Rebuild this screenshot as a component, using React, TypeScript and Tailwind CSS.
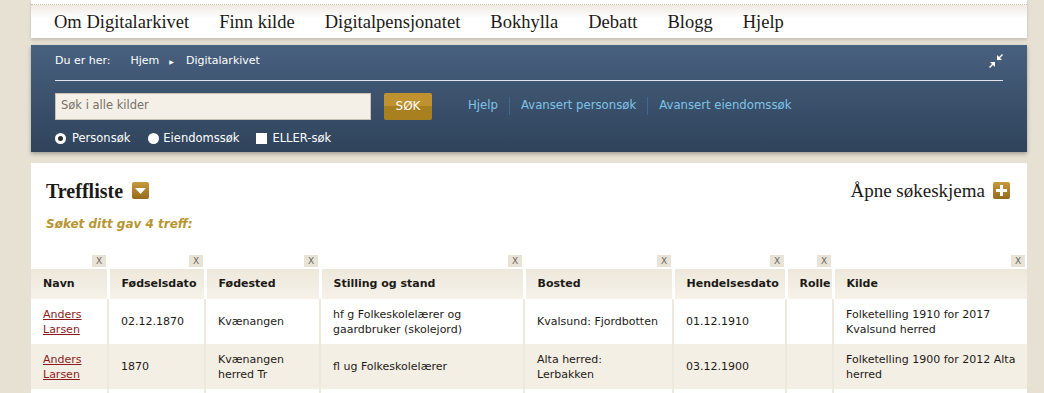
import React from 'react';

const navItems = ['Om Digitalarkivet', 'Finn kilde', 'Digitalpensjonatet', 'Bokhylla', 'Debatt', 'Blogg', 'Hjelp'];

const columns = [
    { label: 'Navn', width: 77 },
    { label: 'Fødselsdato', width: 97 },
    { label: 'Fødested', width: 115 },
    { label: 'Stilling og stand', width: 204 },
    { label: 'Bosted', width: 149 },
    { label: 'Hendelsesdato', width: 113 },
    { label: 'Rolle', width: 47 },
    { label: 'Kilde', width: 194 },
];

// each cell is a list of lines, the way the original table wraps them
const rows: string[][][] = [
    [['Anders', 'Larsen'], ['02.12.1870'], ['Kvænangen'], ['hf g Folkeskolelærer og', 'gaardbruker (skolejord)'], ['Kvalsund: Fjordbotten'], ['01.12.1910'], [], ['Folketelling 1910 for 2017', 'Kvalsund herred']],
    [['Anders', 'Larsen'], ['1870'], ['Kvænangen', 'herred Tr'], ['fl ug Folkeskolelærer'], ['Alta herred:', 'Lerbakken'], ['03.12.1900'], [], ['Folketelling 1900 for 2012 Alta', 'herred']],
    [[], [], [], [], [], [], [], []],
];

const serif = "font-['Liberation_Serif',Georgia,serif]";
const sans = "font-['DejaVu_Sans',Verdana,sans-serif]";

function GoldBox({ children }: { children: React.ReactNode }) {
    return (
        <span className="inline-flex h-[17px] w-[17px] items-center justify-center rounded-[2px] bg-gradient-to-b from-[#c79a3c] to-[#946a1c]">
            {children}
        </span>
    );
}

export default function App() {
    return (
        <div className={`min-h-[393px] bg-[#e7e1d4] pl-[31px] pr-[17px] ${sans}`}>
            {/* Top navigation */}
            <div className="bg-white pt-[4px] shadow-[0_2px_3px_rgba(0,0,0,0.15)]">
                <div className="border-t border-dotted border-[#c9b99b] bg-gradient-to-b from-[#efebe3] to-white to-40%">
                    <ul className={`flex h-[33px] items-center pl-[8px] text-[18.5px] text-[#1d1a16] ${serif}`}>
                        {navItems.map(item => (
                            <li key={item} className="px-[15px] pt-[2px]">{item}</li>
                        ))}
                    </ul>
                </div>
            </div>

            {/* Search panel */}
            <div className="mt-[7px] bg-gradient-to-b from-[#48617f] to-[#2f435b] px-[24px] pt-[8px] pb-[5px] text-white shadow-[0_2px_4px_rgba(0,0,0,0.3)]">
                <div className="flex items-center justify-between">
                    <div className="flex items-center text-[11px]">
                        <span>Du er her:</span>
                        <span className="ml-[20px]">Hjem</span>
                        <span className="ml-[10px] text-[6px]">▶</span>
                        <span className="ml-[12px]">Digitalarkivet</span>
                    </div>
                    <svg width="16" height="16" viewBox="0 0 16 16" className="mr-[-1px]" fill="white">
                        <path d="M9 2 L9 7 L14 7 L12 5 L15 2 L14 1 L11 4 Z" />
                        <path d="M7 14 L7 9 L2 9 L4 11 L1 14 L2 15 L5 12 Z" />
                    </svg>
                </div>
                <div className="mt-[10px] h-px bg-[#dfe5ec]" />
                <div className="mt-[12px] flex items-center">
                    <div className="flex h-[27px] w-[316px] items-center border border-[#c9c2b4] bg-[#f4f0e7] px-[5px] text-[11.5px] text-[#767168]">
                        Søk i alle kilder
                    </div>
                    <button className="ml-[13px] h-[27px] w-[48px] rounded-[2px] bg-gradient-to-b from-[#c0912f] from-50% to-[#a8801f] to-50% text-[12px] text-white">
                        SØK
                    </button>
                    <div className="ml-[36px] flex items-center text-[11.7px] text-[#7fc4e8]">
                        <span>Hjelp</span>
                        <span className="mx-[11px] h-[18px] w-px bg-[#3e6a8f]" />
                        <span>Avansert personsøk</span>
                        <span className="mx-[11px] h-[18px] w-px bg-[#3e6a8f]" />
                        <span>Avansert eiendomssøk</span>
                    </div>
                </div>
                <div className="mt-[10px] flex items-center text-[11.5px]">
                    <span className="flex h-[11px] w-[11px] items-center justify-center rounded-full bg-white">
                        <span className="h-[5px] w-[5px] rounded-full bg-[#2d2d2d]" />
                    </span>
                    <span className="ml-[6px]">Personsøk</span>
                    <span className="ml-[18px] h-[11px] w-[11px] rounded-full bg-white" />
                    <span className="ml-[4px]">Eiendomssøk</span>
                    <span className="ml-[17px] h-[11px] w-[11px] bg-white" />
                    <span className="ml-[5px]">ELLER-søk</span>
                </div>
            </div>

            {/* Results */}
            <div className="mt-[11px] bg-white">
                <div className="flex items-center justify-between px-[15px] pt-[13px]">
                    <div className="flex items-center gap-[9px]">
                        <h1 className={`text-[20px] font-bold text-[#1d1a16] ${serif}`}>Treffliste</h1>
                        <GoldBox>
                            <svg width="11" height="6" viewBox="0 0 11 6"><path d="M0 0 H11 L5.5 6 Z" fill="white" /></svg>
                        </GoldBox>
                    </div>
                    <div className="flex items-center gap-[8px] pr-[2px]">
                        <span className={`text-[19px] text-[#1d1a16] ${serif}`}>Åpne søkeskjema</span>
                        <GoldBox>
                            <svg width="11" height="11" viewBox="0 0 11 11"><path d="M4 0 H7 V4 H11 V7 H7 V11 H4 V7 H0 V4 H4 Z" fill="white" /></svg>
                        </GoldBox>
                    </div>
                </div>
                <p className="mt-[9px] pl-[15px] text-[12px] font-bold italic text-[#b89531]">Søket ditt gav 4 treff:</p>

                <table className="mt-[20px] w-full table-fixed border-collapse text-[11px] text-[#1d1a16]">
                    <colgroup>
                        {columns.map(c => <col key={c.label} style={{ width: c.width }} />)}
                    </colgroup>
                    <thead>
                        <tr className="h-[12px]">
                            {columns.map(c => (
                                <td key={c.label} className="p-0 pr-[2px] text-right align-bottom">
                                    <span className="inline-flex h-[12px] w-[14px] items-center justify-center bg-[#e9e3d7] text-[9px] leading-none text-[#6b6760]">X</span>
                                </td>
                            ))}
                        </tr>
                        <tr className="h-[30px] bg-gradient-to-b from-[#eee8dc] to-[#f6f2ea]">
                            {columns.map((c, i) => (
                                <th key={c.label} className={`pl-[12px] text-left font-bold ${i < columns.length - 1 ? 'border-r-[3px] border-white' : ''}`}>
                                    {c.label}
                                </th>
                            ))}
                        </tr>
                    </thead>
                    <tbody>
                        {rows.map((row, r) => (
                            <tr key={r} className={`h-[45px] ${r % 2 === 1 ? 'bg-[#f4efe5]' : 'bg-white'}`}>
                                {row.map((lines, i) => (
                                    <td
                                        key={i}
                                        className={`pl-[12px] pr-[4px] align-middle leading-[15px] ${i < row.length - 1 ? 'border-r-[2px] border-[#efe9dd]' : ''}`}
                                    >
                                        {lines.map((line, l) => (
                                            <div key={l}>
                                                {i === 0 ? <a href="#" className="text-[#8e1b1b] underline">{line}</a> : line}
                                            </div>
                                        ))}
                                    </td>
                                ))}
                            </tr>
                        ))}
                    </tbody>
                </table>
            </div>
        </div>
    );
}
